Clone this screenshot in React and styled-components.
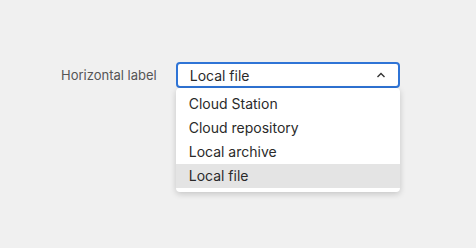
import React from 'react';
import styled, { createGlobalStyle } from 'styled-components';

const GlobalStyle = createGlobalStyle`
    html, body {
        margin: 0;
        background: #f0f0f0;
    }
    body {
        font-family: Inter, "Noto Sans", sans-serif;
    }
`

const Page = styled.div`
    width: 476px;
    height: 248px;
    padding: 62px 0 0 61px;
    box-sizing: border-box;
`

const Field = styled.div`
    display: flex;
    align-items: flex-start;
    gap: 19px;
`

const Label = styled.label`
    font-size: 13px;
    color: #555;
    line-height: 26px;
`

const SelectWrap = styled.div`
    position: relative;
    width: 224px;
`

const Trigger = styled.button`
    width: 100%;
    height: 26px;
    box-sizing: border-box;
    display: flex;
    align-items: center;
    justify-content: space-between;
    padding: 0 12px 0 12px;
    background: #fff;
    border: 2px solid #2f74d6;
    border-radius: 4px;
    font-family: inherit;
    font-size: 14px;
    color: #2a2a2a;
    cursor: pointer;
`

const Menu = styled.ul`
    position: absolute;
    top: 26px;
    left: 0;
    right: 0;
    margin: 0;
    padding: 4px 0 4px;
    list-style: none;
    background: #fff;
    border-radius: 4px;
    box-shadow: 0 2px 6px rgba(0, 0, 0, 0.18);
`

const Option = styled.li`
    height: 24px;
    line-height: 24px;
    padding: 0 13px;
    font-size: 14px;
    color: #2a2a2a;
    background: ${props => props.active ? '#e4e4e4' : 'transparent'};
`

const options = ['Cloud Station', 'Cloud repository', 'Local archive', 'Local file']

function Chevron() {
    return (
        <svg width="10" height="6" viewBox="0 0 10 6">
            <path d="M1.5 5 L5 1.5 L8.5 5" fill="none" stroke="#333" strokeWidth="1.4" />
        </svg>
    )
}

export default function App() {
    const value = 'Local file'
    return (
        <Page>
            <GlobalStyle />
            <Field>
                <Label>Horizontal label</Label>
                <SelectWrap>
                    <Trigger>
                        <span>{value}</span>
                        <Chevron />
                    </Trigger>
                    <Menu>
                        {options.map(o => (
                            <Option key={o} active={o === value}>{o}</Option>
                        ))}
                    </Menu>
                </SelectWrap>
            </Field>
        </Page>
    )
}
